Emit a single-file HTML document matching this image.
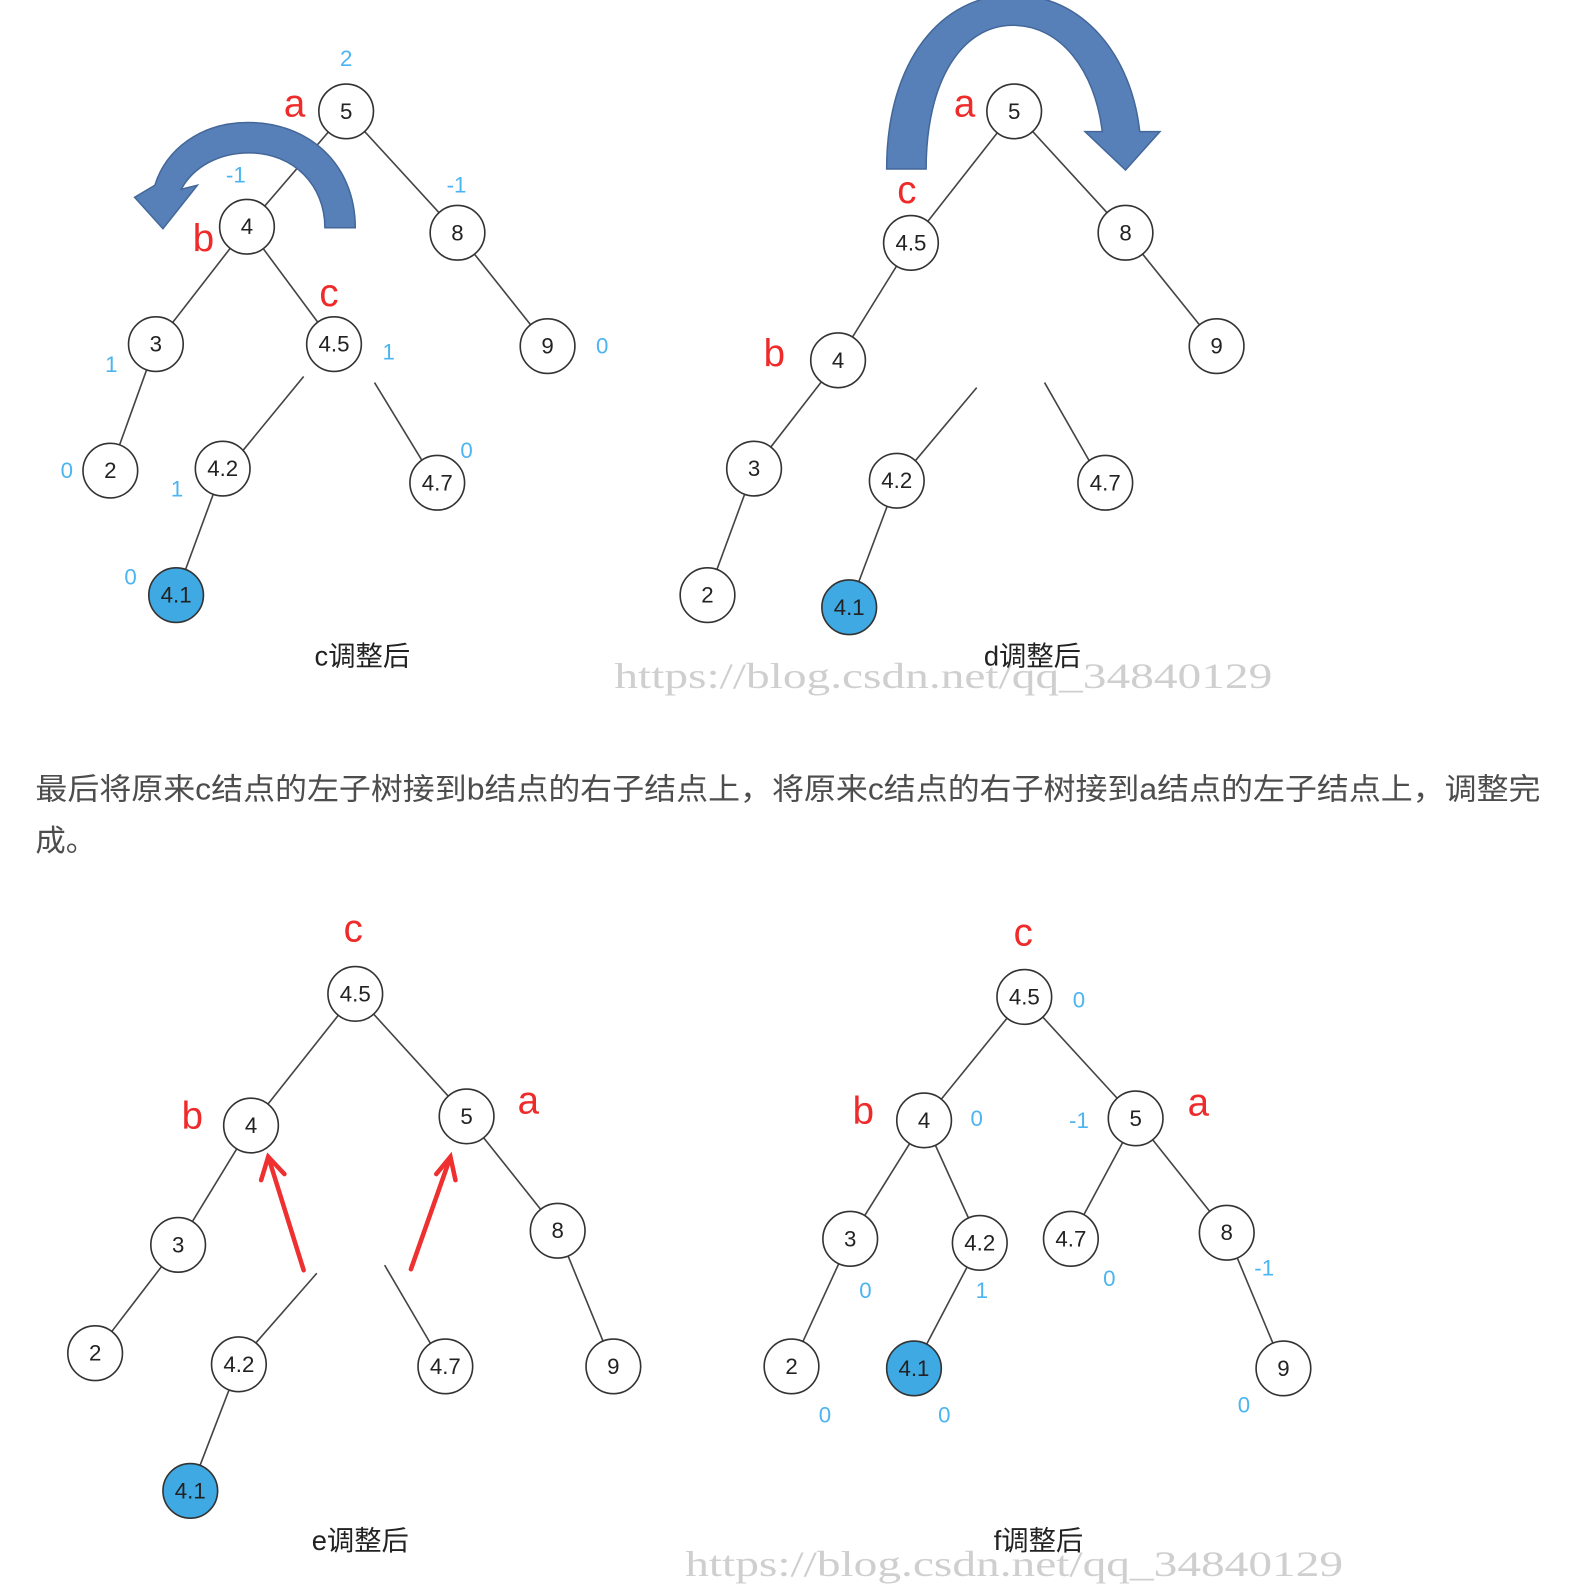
<!DOCTYPE html>
<html><head><meta charset="utf-8"><style>
html,body{margin:0;padding:0;background:#fff;width:1582px;height:1588px;overflow:hidden}
svg{display:block}
.n{fill:#fff;stroke:#333;stroke-width:1.6}
.nb{fill:#3fa9e3;stroke:#333;stroke-width:1.6}
.t{font-family:"Liberation Sans",sans-serif;font-size:22px;fill:#222;text-anchor:middle;dominant-baseline:central}
.r{font-family:"Liberation Sans",sans-serif;font-size:38px;fill:#ee2a2a;text-anchor:middle;dominant-baseline:central}
.bl{font-family:"Liberation Sans",sans-serif;font-size:22px;fill:#4cb4f0;text-anchor:middle;dominant-baseline:central}
.cap{font-family:"Liberation Sans","Noto Sans CJK SC",sans-serif;font-size:27px;fill:#222;text-anchor:middle;dominant-baseline:central}
.wm{font-family:"Liberation Serif",serif;font-size:36px;fill:#cfcfcf}
.p{font-family:"Liberation Sans","Noto Sans CJK SC",sans-serif;font-size:30px;fill:#4d4d4d}
line{stroke:#444;stroke-width:1.6}
</style></head><body>
<svg width="1582" height="1588" viewBox="0 0 1563 1569" preserveAspectRatio="none" xmlns="http://www.w3.org/2000/svg">
<!-- Diagram 1 -->
<g>
<line x1="342" y1="110" x2="244" y2="224"/><line x1="342" y1="110" x2="452" y2="230"/>
<line x1="244" y1="224" x2="154" y2="340"/><line x1="244" y1="224" x2="330" y2="340"/>
<line x1="452" y1="230" x2="541" y2="342"/><line x1="154" y1="340" x2="109" y2="465"/>
<line x1="220" y1="463" x2="174" y2="588"/>
<line x1="300" y1="372" x2="236" y2="450"/><line x1="370" y1="378" x2="420" y2="460"/>
<path d="M351,225 C351,162 305,121 245,121 C198,121 164,148 153,183 L133,195 L161,226 L195,183 L179,187 C191,165 216,151 246,151 C290,151 321,183 321,225 Z" fill="#5780b8" stroke="#44679a" stroke-width="1.5"/>
<circle class="n" cx="342" cy="110" r="27"/><text class="t" x="342" y="110">5</text>
<circle class="n" cx="244" cy="224" r="27"/><text class="t" x="244" y="224">4</text>
<circle class="n" cx="452" cy="230" r="27"/><text class="t" x="452" y="230">8</text>
<circle class="n" cx="154" cy="340" r="27"/><text class="t" x="154" y="340">3</text>
<circle class="n" cx="330" cy="340" r="27"/><text class="t" x="330" y="340">4.5</text>
<circle class="n" cx="541" cy="342" r="27"/><text class="t" x="541" y="342">9</text>
<circle class="n" cx="109" cy="465" r="27"/><text class="t" x="109" y="465">2</text>
<circle class="n" cx="220" cy="463" r="27"/><text class="t" x="220" y="463">4.2</text>
<circle class="n" cx="432" cy="477" r="27"/><text class="t" x="432" y="477">4.7</text>
<circle class="nb" cx="174" cy="588" r="27"/><text class="t" x="174" y="588">4.1</text>
<text class="r" x="291" y="103">a</text><text class="r" x="201" y="236">b</text><text class="r" x="325" y="290">c</text>
<text class="bl" x="342" y="58">2</text><text class="bl" x="233" y="173">-1</text><text class="bl" x="451" y="183">-1</text>
<text class="bl" x="110" y="360">1</text><text class="bl" x="384" y="348">1</text><text class="bl" x="595" y="342">0</text>
<text class="bl" x="66" y="465">0</text><text class="bl" x="175" y="483">1</text><text class="bl" x="461" y="445">0</text><text class="bl" x="129" y="570">0</text>
<text class="cap" x="358" y="648">c调整后</text>
</g>
<!-- Diagram 2 -->
<g>
<line x1="1002" y1="110" x2="900" y2="240"/><line x1="1002" y1="110" x2="1112" y2="230"/>
<line x1="900" y1="240" x2="828" y2="356"/><line x1="1112" y1="230" x2="1202" y2="342"/>
<line x1="828" y1="356" x2="745" y2="463"/><line x1="745" y1="463" x2="699" y2="588"/>
<line x1="886" y1="475" x2="839" y2="600"/>
<line x1="965" y1="383" x2="902" y2="458"/><line x1="1032" y1="378" x2="1080" y2="462"/>
<path d="M876,167 C876,60 930,-5 1001,-5 C1070,-5 1118,55 1126,130 L1146,130 L1112,168 L1072,130 L1089,130 C1082,70 1048,25 1001,25 C950,25 915,80 915,167 Z" fill="#5780b8" stroke="#44679a" stroke-width="1.5"/>
<circle class="n" cx="1002" cy="110" r="27"/><text class="t" x="1002" y="110">5</text>
<circle class="n" cx="900" cy="240" r="27"/><text class="t" x="900" y="240">4.5</text>
<circle class="n" cx="1112" cy="230" r="27"/><text class="t" x="1112" y="230">8</text>
<circle class="n" cx="828" cy="356" r="27"/><text class="t" x="828" y="356">4</text>
<circle class="n" cx="1202" cy="342" r="27"/><text class="t" x="1202" y="342">9</text>
<circle class="n" cx="745" cy="463" r="27"/><text class="t" x="745" y="463">3</text>
<circle class="n" cx="886" cy="475" r="27"/><text class="t" x="886" y="475">4.2</text>
<circle class="n" cx="1092" cy="477" r="27"/><text class="t" x="1092" y="477">4.7</text>
<circle class="n" cx="699" cy="588" r="27"/><text class="t" x="699" y="588">2</text>
<circle class="nb" cx="839" cy="600" r="27"/><text class="t" x="839" y="600">4.1</text>
<text class="r" x="953" y="103">a</text><text class="r" x="896" y="188">c</text><text class="r" x="765" y="350">b</text>
<text class="wm" x="607" y="680" textLength="650" lengthAdjust="spacingAndGlyphs">https://blog.csdn.net/qq_34840129</text>
<text class="cap" x="1020" y="648">d调整后</text>
</g>
<!-- Paragraph -->
<text class="p" x="35" y="790" textLength="1487" lengthAdjust="spacingAndGlyphs">最后将原来c结点的左子树接到b结点的右子结点上，将原来c结点的右子树接到a结点的左子结点上，调整完</text>
<text class="p" x="35" y="841">成。</text>
<!-- Diagram 3 -->
<g>
<line x1="351" y1="982" x2="248" y2="1112"/><line x1="351" y1="982" x2="461" y2="1103"/>
<line x1="248" y1="1112" x2="176" y2="1230"/><line x1="176" y1="1230" x2="94" y2="1337"/>
<line x1="461" y1="1103" x2="551" y2="1216"/><line x1="551" y1="1216" x2="606" y2="1350"/>
<line x1="236" y1="1348" x2="188" y2="1473"/>
<line x1="313" y1="1258" x2="250" y2="1330"/><line x1="380" y1="1250" x2="428" y2="1332"/>
<circle class="n" cx="351" cy="982" r="27"/><text class="t" x="351" y="982">4.5</text>
<circle class="n" cx="248" cy="1112" r="27"/><text class="t" x="248" y="1112">4</text>
<circle class="n" cx="461" cy="1103" r="27"/><text class="t" x="461" y="1103">5</text>
<circle class="n" cx="176" cy="1230" r="27"/><text class="t" x="176" y="1230">3</text>
<circle class="n" cx="551" cy="1216" r="27"/><text class="t" x="551" y="1216">8</text>
<circle class="n" cx="94" cy="1337" r="27"/><text class="t" x="94" y="1337">2</text>
<circle class="n" cx="236" cy="1348" r="27"/><text class="t" x="236" y="1348">4.2</text>
<circle class="n" cx="440" cy="1350" r="27"/><text class="t" x="440" y="1350">4.7</text>
<circle class="n" cx="606" cy="1350" r="27"/><text class="t" x="606" y="1350">9</text>
<circle class="nb" cx="188" cy="1473" r="27"/><text class="t" x="188" y="1473">4.1</text>
<g stroke="#ee3030" stroke-width="4.5" fill="none" stroke-linecap="round">
<path d="M300,1255 L266,1146"/><path d="M258,1166 L265,1143 L281,1160"/>
<path d="M406,1254 L444,1146"/><path d="M431,1160 L445,1143 L450,1166"/>
</g>
<text class="r" x="349" y="918">c</text><text class="r" x="190" y="1103">b</text><text class="r" x="522" y="1088">a</text>
<text class="cap" x="356" y="1522">e调整后</text>
</g>
<!-- Diagram 4 -->
<g>
<line x1="1012" y1="985" x2="913" y2="1107"/><line x1="1012" y1="985" x2="1122" y2="1105"/>
<line x1="913" y1="1107" x2="840" y2="1224"/><line x1="913" y1="1107" x2="968" y2="1228"/>
<line x1="1122" y1="1105" x2="1058" y2="1224"/><line x1="1122" y1="1105" x2="1212" y2="1218"/>
<line x1="840" y1="1224" x2="782" y2="1350"/><line x1="968" y1="1228" x2="903" y2="1352"/>
<line x1="1212" y1="1218" x2="1268" y2="1352"/>
<circle class="n" cx="1012" cy="985" r="27"/><text class="t" x="1012" y="985">4.5</text>
<circle class="n" cx="913" cy="1107" r="27"/><text class="t" x="913" y="1107">4</text>
<circle class="n" cx="1122" cy="1105" r="27"/><text class="t" x="1122" y="1105">5</text>
<circle class="n" cx="840" cy="1224" r="27"/><text class="t" x="840" y="1224">3</text>
<circle class="n" cx="968" cy="1228" r="27"/><text class="t" x="968" y="1228">4.2</text>
<circle class="n" cx="1058" cy="1224" r="27"/><text class="t" x="1058" y="1224">4.7</text>
<circle class="n" cx="1212" cy="1218" r="27"/><text class="t" x="1212" y="1218">8</text>
<circle class="n" cx="782" cy="1350" r="27"/><text class="t" x="782" y="1350">2</text>
<circle class="nb" cx="903" cy="1352" r="27"/><text class="t" x="903" y="1352">4.1</text>
<circle class="n" cx="1268" cy="1352" r="27"/><text class="t" x="1268" y="1352">9</text>
<text class="r" x="1011" y="922">c</text><text class="r" x="853" y="1098">b</text><text class="r" x="1184" y="1090">a</text>
<text class="bl" x="1066" y="988">0</text><text class="bl" x="965" y="1105">0</text><text class="bl" x="1066" y="1107">-1</text>
<text class="bl" x="855" y="1275">0</text><text class="bl" x="970" y="1275">1</text><text class="bl" x="1096" y="1263">0</text>
<text class="bl" x="1249" y="1253">-1</text><text class="bl" x="815" y="1398">0</text><text class="bl" x="933" y="1398">0</text><text class="bl" x="1229" y="1388">0</text>
<text class="wm" x="677" y="1557" textLength="650" lengthAdjust="spacingAndGlyphs">https://blog.csdn.net/qq_34840129</text>
<text class="cap" x="1026" y="1522">f调整后</text>
</g>
</svg>
</body></html>
